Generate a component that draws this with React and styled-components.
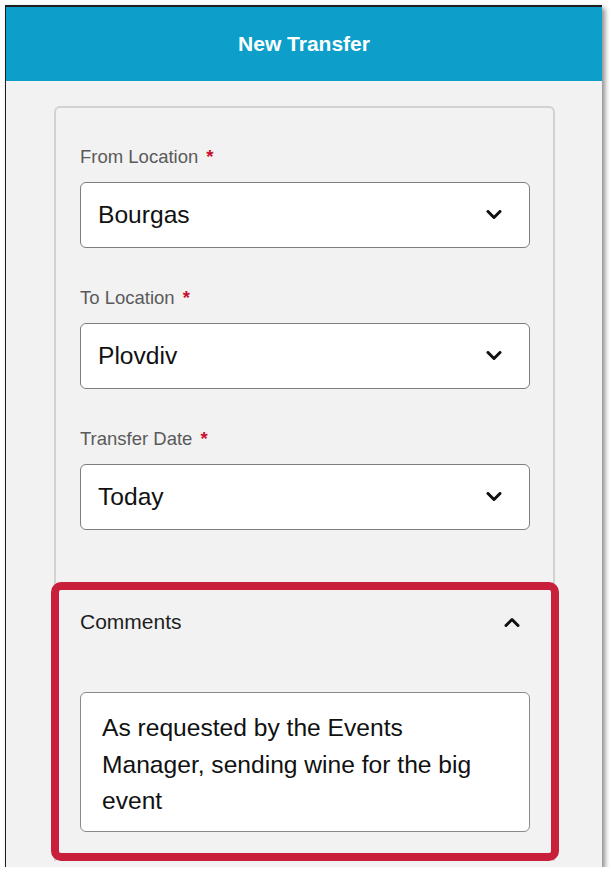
import React from "react";
import styled, { createGlobalStyle } from "styled-components";

const Global = createGlobalStyle`
  html, body { margin: 0; padding: 0; background: #ffffff; }
  body { font-family: "Liberation Sans", Arial, Helvetica, sans-serif; }
  * { box-sizing: border-box; }
`;

const Frame = styled.div`
  margin: 5px 0 0 5px;
  width: 597px;
  height: 862px;
  border-top: 2px solid #1f1f1f;
  border-left: 1px solid #1f1f1f;
  background: #f2f2f2;
  box-shadow: 3px 3px 5px rgba(0, 0, 0, 0.45);
  overflow: hidden;
  display: flex;
  flex-direction: column;
`;

const Header = styled.header`
  height: 74px;
  flex: none;
  background: #0d9fc9;
  display: flex;
  align-items: center;
  justify-content: center;
`;

const Title = styled.h1`
  margin: 0;
  color: #ffffff;
  font-size: 21px;
  font-weight: 700;
`;

const Card = styled.section`
  margin: 25px 0 0 48px;
  width: 501px;
  border: 2px solid #d2d2d2;
  border-bottom: none;
  border-radius: 6px 6px 0 0;
  padding-top: 38px;
  display: flex;
  flex-direction: column;
`;

const Fields = styled.div`
  padding: 0 23px 0 24px;
  display: flex;
  flex-direction: column;
  gap: 39px;
`;

const Field = styled.div`
  display: flex;
  flex-direction: column;
  gap: 14px;
`;

const Label = styled.label`
  font-size: 18.5px;
  line-height: 22px;
  color: #5a5a5a;
`;

const Req = styled.span`
  color: #c8102e;
  font-weight: 700;
  margin-left: 8px;
`;

const Select = styled.div`
  height: 66px;
  background: #ffffff;
  border: 1.5px solid #7e7e7e;
  border-radius: 6px;
  display: flex;
  align-items: center;
  justify-content: space-between;
  padding: 0 27px 0 17px;
  font-size: 24.6px;
  color: #111111;
`;

const Highlight = styled.div`
  margin: 52px -6px 0 -5px;
  border: 8px solid #c8203a;
  border-radius: 10px;
  padding: 19px 21px 21px 21px;
  display: flex;
  flex-direction: column;
  gap: 58px;
`;

const SectionHead = styled.div`
  display: flex;
  align-items: center;
  justify-content: space-between;
  padding-right: 10px;
  font-size: 21px;
  line-height: 25px;
  color: #1e1e1e;
`;

const TextBox = styled.div`
  height: 140px;
  background: #ffffff;
  border: 1.5px solid #8a8a8a;
  border-radius: 6px;
  padding: 17px 40px 0 21px;
  font-size: 24.6px;
  line-height: 36.5px;
  color: #111111;
`;

const Chevron = ({ up }) => (
  <svg width="16" height="10" viewBox="0 0 16 10" aria-hidden="true">
    <polyline
      points={up ? "2,8.5 8,2.5 14,8.5" : "2,1.5 8,7.5 14,1.5"}
      fill="none"
      stroke="#111"
      strokeWidth="3"
      strokeLinecap="round"
      strokeLinejoin="round"
    />
  </svg>
);

const fields = [
  { label: "From Location", value: "Bourgas" },
  { label: "To Location", value: "Plovdiv" },
  { label: "Transfer Date", value: "Today" },
];

export default function App() {
  return (
    <>
      <Global />
      <Frame>
        <Header>
          <Title>New Transfer</Title>
        </Header>
        <Card>
          <Fields>
            {fields.map((f) => (
              <Field key={f.label}>
                <Label>
                  {f.label}
                  <Req>*</Req>
                </Label>
                <Select>
                  <span>{f.value}</span>
                  <Chevron />
                </Select>
              </Field>
            ))}
          </Fields>
          <Highlight>
            <SectionHead>
              <span>Comments</span>
              <Chevron up />
            </SectionHead>
            <TextBox>
              As requested by the Events Manager, sending wine for the big event
            </TextBox>
          </Highlight>
        </Card>
      </Frame>
    </>
  );
}
